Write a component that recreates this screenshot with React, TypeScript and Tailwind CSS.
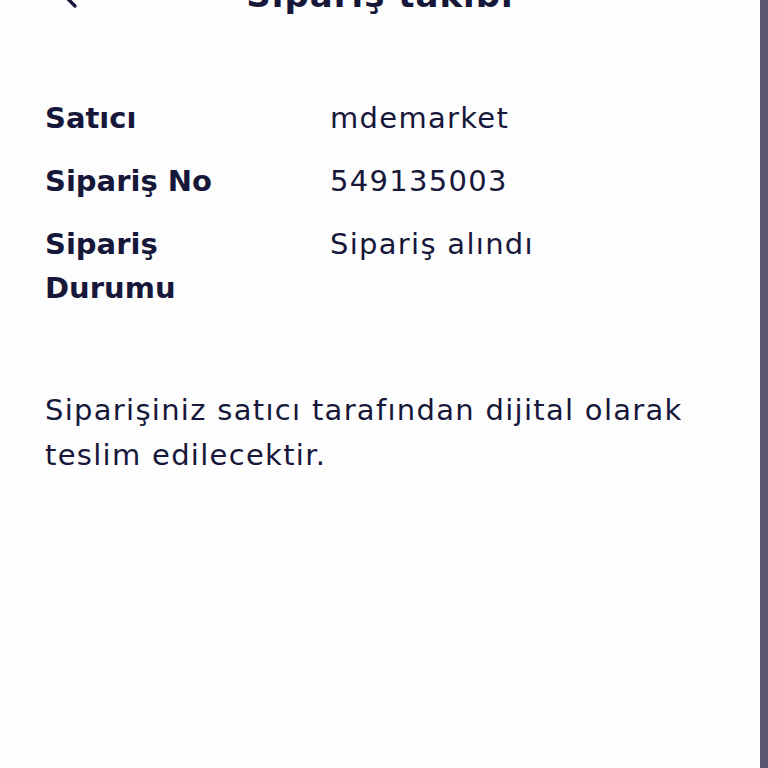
import { ChevronLeft } from "lucide-react";

const rows = [
  { label: "Satıcı", value: "mdemarket" },
  { label: "Sipariş No", value: "549135003" },
  { label: "Sipariş Durumu", value: "Sipariş alındı" },
];

export default function App() {
  return (
    <div className="flex h-screen w-full overflow-hidden bg-[#fdfdfe] text-[#17173a] [font-family:'DejaVu_Sans',sans-serif]">
      <div className="flex-1 flex flex-col">
        <header className="relative mt-[-25px] flex h-[40px] items-center justify-center">
          <ChevronLeft className="absolute left-[55px] top-[7px] h-8 w-8" strokeWidth={2.5} />
          <h1 className="text-[34px] leading-[40px] font-bold tracking-[1px]">Sipariş takibi</h1>
        </header>

        <div className="px-[45px] pt-[81px]">
          <div className="flex flex-col gap-[19px]">
            {rows.map((r) => (
              <div key={r.label} className="flex text-[29px] leading-[44px]">
                <div className="w-[285px] shrink-0 pr-[80px] font-bold">{r.label}</div>
                <div className="tracking-[1.3px]">{r.value}</div>
              </div>
            ))}
          </div>

          <p className="mt-[78px] max-w-[690px] text-[29px] leading-[45px] tracking-[1.3px]">
            Siparişiniz satıcı tarafından dijital olarak teslim edilecektir.
          </p>
        </div>
      </div>
      <div className="w-[8px] bg-[#5a5773]" />
    </div>
  );
}
